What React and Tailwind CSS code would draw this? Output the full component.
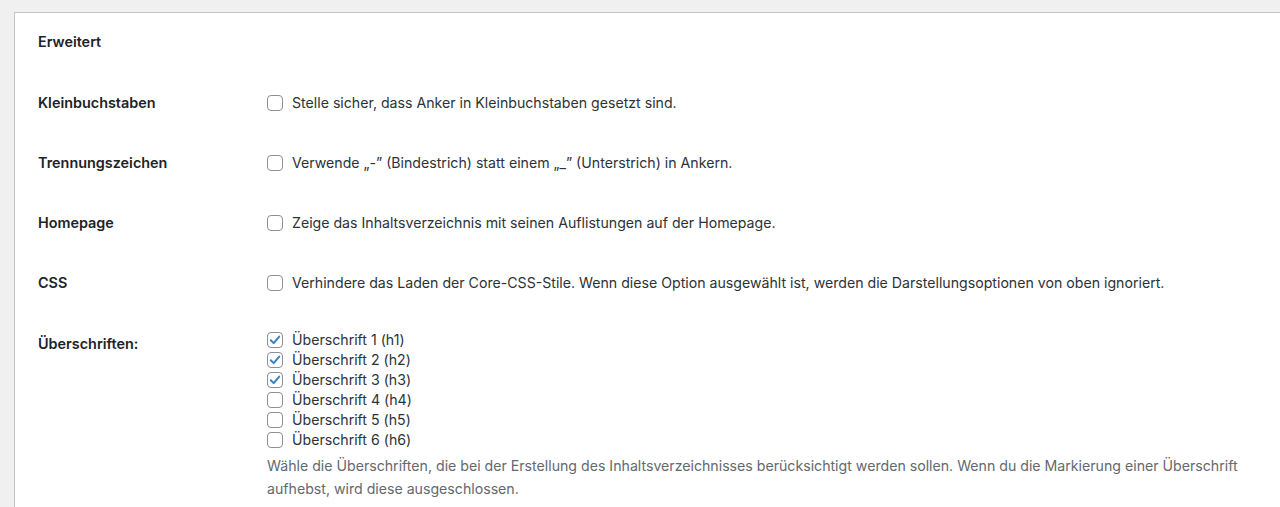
import React from 'react';

const Checkbox = ({ checked }) => (
    <span className="w-4 h-4 shrink-0 rounded-[4px] border border-[#8c8f94] bg-white flex items-center justify-center">
        {checked && (
            <svg width="14" height="14" viewBox="0 0 14 14" fill="none">
                <path d="M2.8 7.2 L5.7 10.1 L11.2 3.6" stroke="#3582c4" strokeWidth="2" strokeLinecap="round" strokeLinejoin="round" />
            </svg>
        )}
    </span>
);

const rows = [
    { label: 'Kleinbuchstaben', text: 'Stelle sicher, dass Anker in Kleinbuchstaben gesetzt sind.' },
    { label: 'Trennungszeichen', text: 'Verwende \u201E-\u201D (Bindestrich) statt einem \u201E_\u201D (Unterstrich) in Ankern.' },
    { label: 'Homepage', text: 'Zeige das Inhaltsverzeichnis mit seinen Auflistungen auf der Homepage.' },
    { label: 'CSS', text: 'Verhindere das Laden der Core-CSS-Stile. Wenn diese Option ausgewählt ist, werden die Darstellungsoptionen von oben ignoriert.' },
];

const headings = [
    { label: 'Überschrift 1 (h1)', checked: true },
    { label: 'Überschrift 2 (h2)', checked: true },
    { label: 'Überschrift 3 (h3)', checked: true },
    { label: 'Überschrift 4 (h4)', checked: false },
    { label: 'Überschrift 5 (h5)', checked: false },
    { label: 'Überschrift 6 (h6)', checked: false },
];

export default function App() {
    return (
        <div className="min-h-[507px] bg-[#f0f0f1] pt-3 pl-[14px] font-['Inter',sans-serif] text-[14.15px] text-[#2c3338] overflow-hidden">
            <div className="bg-white border-t border-l border-[#c3c4c7] min-h-[495px] pl-[23px] pt-[19px]">
                <h2 className="h-5 leading-5 font-semibold text-[14.4px] text-[#1d2327]">Erweitert</h2>

                <div className="mt-[21px]">
                    {rows.map((row) => (
                        <div key={row.label} className="h-[60px] flex items-center">
                            <div className="w-[229px] shrink-0 font-semibold text-[14.4px] text-[#1d2327]">{row.label}</div>
                            <label className="flex items-center gap-[9px]">
                                <Checkbox checked={false} />
                                <span>{row.text}</span>
                            </label>
                        </div>
                    ))}

                    <div className="flex">
                        <div className="w-[229px] shrink-0 pt-[21px] leading-5 font-semibold text-[14.4px] text-[#1d2327]">Überschriften:</div>
                        <div className="pt-[17px] pr-10">
                            {headings.map((h) => (
                                <label key={h.label} className="h-5 flex items-center gap-[9px]">
                                    <Checkbox checked={h.checked} />
                                    <span>{h.label}</span>
                                </label>
                            ))}
                            <p className="mt-1 leading-[23px] text-[#646970]">
                                Wähle die Überschriften, die bei der Erstellung des Inhaltsverzeichnisses berücksichtigt werden sollen. Wenn du die Markierung einer Überschrift aufhebst, wird diese ausgeschlossen.
                            </p>
                        </div>
                    </div>
                </div>
            </div>
        </div>
    );
}
